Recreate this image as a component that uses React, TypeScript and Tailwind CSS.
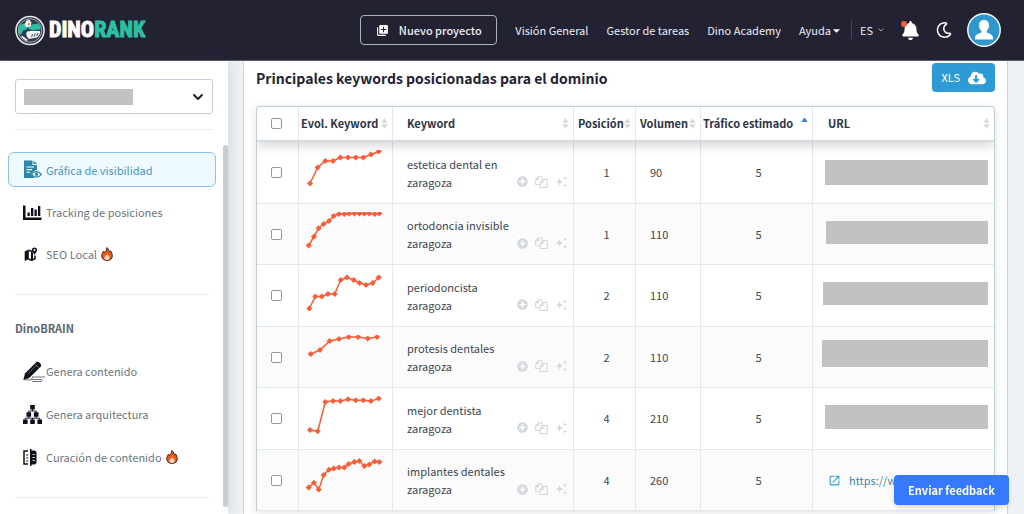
import React from 'react';
import { MdLibraryAdd, MdOpenInNew } from 'react-icons/md';
import { FaBell, FaRegMoon, FaCloudDownloadAlt, FaCaretDown, FaPlusCircle } from 'react-icons/fa';
import { ChevronDown } from 'lucide-react';

const keywords = [
    {
        text: "estetica dental en zaragoza", position: 1, volume: 90, traffic: 5,
        bar: "h-[25px] w-[163px]",
        points: [[11, 41.5], [18.7, 25.5], [26.3, 19], [34, 19], [41.3, 15.5], [49, 15.5], [56.7, 15.5], [64.3, 15.5], [72, 12.5], [79.7, 9.5]]
    },
    {
        text: "ortodoncia invisible zaragoza", position: 1, volume: 110, traffic: 5,
        bar: "mb-1 h-[23px] w-[162px]",
        points: [[9.7, 41.5], [15, 32.5], [19.7, 24.2], [24.7, 20], [30, 17], [34.7, 12], [40, 10], [45.3, 10], [50, 9.5], [55.3, 9.5], [60.3, 9.5], [65.3, 9.5], [70.3, 9.5], [75.7, 10], [80.3, 9.5]]
    },
    {
        text: "periodoncista zaragoza", position: 2, volume: 110, traffic: 5,
        bar: "mb-1 h-[23px] w-[165px]",
        points: [[10.3, 43.5], [16.3, 31.5], [22.7, 31.5], [29, 29], [35.7, 29], [41.7, 15], [48, 12.5], [54.7, 15], [60.7, 18], [67, 20], [73.7, 18], [79.7, 12.5]]
    },
    {
        text: "protesis dentales zaragoza", position: 2, volume: 110, traffic: 5,
        bar: "mb-2 h-[27px] w-[166px]",
        points: [[11.7, 27], [21, 23], [30.7, 14], [40, 12], [49.7, 10], [59, 10], [68.7, 11.5], [78, 10]]
    },
    {
        text: "mejor dentista zaragoza", position: 4, volume: 210, traffic: 5,
        bar: "mb-1 h-[24px] w-[163px]",
        points: [[11, 42], [18.7, 43.3], [26.3, 14], [34, 13], [41.3, 13], [49, 11.3], [56.7, 12.3], [64.3, 12.3], [72, 13], [79.7, 10.6]]
    },
    {
        text: "implantes dentales zaragoza", position: 4, volume: 260, traffic: 5,
        url: "https://w",
        points: [[9.7, 37.4], [15, 32.7], [19.7, 39.4], [24.7, 25], [30, 19.7], [34.7, 18.4], [40, 17.4], [45.3, 17.4], [49.7, 14], [55.3, 12], [60.3, 11], [65.3, 16], [70.3, 14.4], [75.7, 11.4], [80.3, 12]]
    }
];

function Logo() {
    return (
        <a href="#" className="flex items-center gap-1" aria-label="DinoRank">
            <svg width="30" height="31" viewBox="0 0 30 31" fill="none">
                <circle cx="15" cy="15.5" r="14" fill="#232233" stroke="#e8eaec" strokeWidth="1.6" />
                <circle cx="15" cy="15.5" r="11.8" fill="#2b3d50" stroke="#cfd6da" strokeWidth="0.8" />
                <path d="M3.5 13c1-3 3-4.500 6-4.500l3 2-1 4-3.500 1-2 4.500c-2-1.500-3-4-2.500-7z" fill="#2cc0a3" />
                <path d="M14 10l9-1.500c2 1.500 2.800 3.500 2.500 6l-8 .5-4-1z" fill="#2cc0a3" />
                <path d="M11 6l3-1.500 2.500 3-1 4-3.500 1-2.500-2.500z" fill="#f3efe6" />
                <path d="M13.500 7.500l1.500 1-.5 2-1.800-.6z" fill="#e2894a" />
                <path d="M12 16.500l5-.8 8 .3c.5 2.500-.8 5-3 6.500l-8 1.500c-2.500-2-3.500-5-2-7.500z" fill="#eef1f2" />
                <path d="M17.500 19l-.8 3M20 18.500l-.6 3M22.500 18l-.6 3" stroke="#2b3d50" strokeWidth=".9" />
                <path d="M7 20.500l6 4.500-2 1-5-4z" fill="#eef1f2" />
            </svg>
            <span className="font-['Liberation_Sans_Narrow','Roboto_Condensed','Liberation_Sans',sans-serif] text-[22px] leading-6 font-bold text-white [-webkit-text-stroke:1px_currentColor]">
                DINO<span className="text-[#2cc0a3]">RANK</span>
            </span>
        </a>
    )
}

function Flame() {
    return (
        <svg width="12" height="14" viewBox="0 0 12 14" fill="none">
            <path d="M5.800.6C8 2 7.800 3.800 8.600 5.200 9.200 4.800 9.300 4.200 9.300 3.800c1.200 1.400 2 3.200 2 5.100 0 2.800-2.200 4.500-5.200 4.500S.7 11.600.7 8.900c0-2.200 1.300-3.400 1.800-4.800.5.4.7.9.8 1.400C4.800 4.500 5.800 2.600 5.800.6z" fill="#f4580f" stroke="#3a2530" strokeWidth="1" />
            <path d="M6 7.200c1.200 1 2.600 2 2.600 3.600S7.500 13 6 13s-2.600-.8-2.600-2.200S5 8.600 6 7.200z" fill="#ffd9c2" />
        </svg>
    )
}

function ReportIcon() {
    return (
        <svg width="19" height="19" viewBox="0 0 19 19" fill="none">
            <path d="M1 .5h8.500v4.500H14v5.200c-2.500.2-4.400 1.600-5.800 3.800.8 1.400 1.700 2.400 2.900 3.200V18H1z" fill="#2b86a8" />
            <path d="M10.500.6L14 4.100h-3.500z" fill="#2b86a8" />
            <path d="M3.500 7h7.500M3.500 9.600h5.500M3.500 12.200H7" stroke="#fff" strokeWidth="1.100" />
            <path d="M8.600 14.300c2.300-3.700 7.200-3.700 9.700 0-2.500 3.700-7.400 3.700-9.700 0z" fill="#fff" stroke="#2b86a8" strokeWidth="1.200" />
            <circle cx="13.500" cy="14.300" r="1.700" fill="#2b86a8" />
        </svg>
    )
}

function TrackingIcon() {
    return (
        <svg width="19" height="15" viewBox="0 0 19 15" fill="#10101c">
            <path d="M0 .5h2.500v12H18.500V15H0z" />
            <path d="M4.500 7.500h2.300V11H4.500zM8 3h2.300v8H8zM11.500 4.500h2.300V11h-2.300zM15 1h2.300v10H15z" />
        </svg>
    )
}

function MapIcon() {
    return (
        <svg width="14" height="14" viewBox="0 0 14 14" fill="none" className="ml-px">
            <path d="M1 4.500L4.500 3v9L1 13.500z" fill="#10101c" stroke="#10101c" strokeWidth=".6" />
            <path d="M4.500 3.200l3.200 1v9L4.500 12M7.700 13.200l3.300-1.500V8.500" stroke="#10101c" strokeWidth="1.500" />
            <path d="M7.500 4.500v8.500l1.500-.7V6z" fill="#10101c" />
            <path d="M10.500.5a2.600 2.600 0 0 1 2.600 2.600c0 2-2.600 4.700-2.600 4.700S7.900 5.100 7.900 3.100A2.600 2.600 0 0 1 10.500.5z" fill="#10101c" />
            <circle cx="10.500" cy="3.100" r="1" fill="#fff" />
        </svg>
    )
}

function WriteIcon() {
    return (
        <svg width="22" height="21" viewBox="0 0 22 21" fill="none" className="shrink-0">
            <path d="M.3 19l1.700-6.500L13.200 1.200c2-1.600 6 2 4.600 4.300L6.200 17z" fill="#10101c" />
            <path d="M5 12.800L14 4M12 3.200l3.800 3.600" stroke="#8b8b95" strokeWidth=".7" />
            <path d="M1 18.800h8M9 16h13M10 16.200c-2 .8-1 2.300 0 2.300h8c1.500.2 1 2 0 2H9.500" stroke="#5b6170" strokeWidth=".9" />
        </svg>
    )
}

function TreeIcon() {
    return (
        <svg width="19" height="19" viewBox="0 0 19 19" fill="#10101c">
            <path d="M7.200 0h4.600v4.600H7.200zM3.500 7.200h4.600v4.600H3.500zM10.900 7.200h4.600v4.600h-4.600zM0 14.400h4.600V19H0zM7.200 14.400h4.600V19H7.200zM14.400 14.400H19V19h-4.600z" />
            <path d="M9.500 4v2.200M5.800 8V6h7.400v2M5.800 11v2.200M13.200 11v2.200M2.300 15v-1.800h14.400V15M9.500 13v2" fill="none" stroke="#10101c" strokeWidth=".9" />
        </svg>
    )
}

function CompareIcon() {
    return (
        <svg width="14" height="17" viewBox="0 0 14 17" fill="none">
            <path d="M5 2H1v13h4" stroke="#10101c" strokeWidth="1.500" />
            <path d="M3.200 6h2M3.200 9h2M3.200 12h2" stroke="#10101c" strokeWidth="1.200" />
            <path d="M7 0h1.500v1.500h3.500l1.500 1.500v11l-1.500 1.500H8.500V17H7z" fill="#10101c" />
            <path d="M9.500 5.500h2.300M9.500 8.500h2.300M9.500 11.500h2.300" stroke="#fff" strokeWidth=".8" />
        </svg>
    )
}

function SortArrows({ active = false }: { active?: boolean }) {
    return (
        <svg width="7" height="11" viewBox="0 0 7 11" className="shrink-0">
            <path d={active ? "M3.500-1L6.500 4H.5z" : "M3.500 0L6.500 4.700H.5z"} fill={active ? "#3d7bd9" : "#d3d8de"} />
            {!active && <path d="M3.500 11L6.500 6.300H.5z" fill="#d3d8de" />}
        </svg>
    )
}

function Sparkline({ points }: { points: number[][] }) {
    return (
        <svg viewBox="0 8 93 45" width="93" height="45" className="mt-2 block">
            <polyline points={points.map((p) => p.join(",")).join(" ")} fill="none" stroke="#fb5c36" strokeWidth="1.500" />
            {points.map(([x, y], index) => (
                <path key={index} d={`M${x - 3} ${y}L${x} ${y - 3}L${x + 3} ${y}L${x} ${y + 3}z`} fill="#fb5c36" />
            ))}
        </svg>
    )
}

function KeywordActions() {
    return (
        <div className="mb-[3px] flex items-center gap-[7px] text-[#d3d8de]">
            <button type="button" aria-label="Añadir"><FaPlusCircle size={11} /></button>
            <button type="button" aria-label="Copiar">
                <svg width="13" height="12" viewBox="0 0 13 12" fill="none" stroke="currentColor" strokeWidth="1.100">
                    <path d="M5 8.500H.7V3.700L3.500.8H7v3M3.600.8v3H.7M8 3.500h4.300v8H5.200V6.400zM8 3.500v3H5.200" />
                </svg>
            </button>
            <button type="button" aria-label="Generar">
                <svg width="12" height="12" viewBox="0 0 12 12" fill="currentColor">
                    <path d="M4.500 2L5.600 4.900 8.500 6 5.600 7.100 4.500 10 3.400 7.100.5 6 3.400 4.900zM10 .3l.6 1.500 1.400.6-1.400.6L10 4.500 9.400 3 8 2.400l1.400-.6zM10 7.500l.6 1.500 1.400.6-1.400.6-.6 1.500-.6-1.500L8 9.600 9.400 9z" />
                </svg>
            </button>
        </div>
    )
}

const checkbox = "block h-[11px] w-[11px] appearance-none rounded-[2px] border border-[#8f979f] bg-white checked:bg-[#2f9bd6]";
const menuItem = "flex h-[18px] items-center gap-1 text-[#6b7683]";
const menuIcon = "flex w-[19px] shrink-0 items-center";

function Header() {
    return (
        <header className="flex h-[61px] shrink-0 items-center justify-between border-b border-[#5d5a69] bg-[#232233] pr-[23px] pl-[15px] text-[11px] text-[#eceef1]">
            <Logo />
            <div className="flex items-center">
                <button type="button" className="flex h-[30px] w-[137px] items-center justify-center gap-[10px] rounded-[4px] border border-[#aab4bf] font-medium">
                    <MdLibraryAdd size={13} className="text-white" />
                    Nuevo proyecto
                </button>
                <nav className="ml-[18px] flex items-center gap-[18px]">
                    <a href="#">Visión General</a>
                    <a href="#">Gestor de tareas</a>
                    <a href="#">Dino Academy</a>
                    <a href="#" className="flex items-center">Ayuda <FaCaretDown size={11} className="text-white" /></a>
                </nav>
                <button type="button" className="ml-[9px] flex h-[18px] items-center gap-1 border-l border-[#3d4a5c] pl-2">
                    ES <ChevronDown size={8} />
                </button>
                <button type="button" aria-label="Notificaciones" className="relative ml-4 text-white">
                    <FaBell size={19} />
                    <span className="absolute top-0 left-0 h-[6px] w-[6px] rounded-full bg-[#fb5c36]" />
                </button>
                <button type="button" aria-label="Modo oscuro" className="ml-4 text-white"><FaRegMoon size={16} /></button>
                <button type="button" aria-label="Cuenta" className="ml-[15px]">
                    <svg width="34" height="34" viewBox="0 0 34 34" fill="none">
                        <circle cx="17" cy="17" r="16.200" fill="#2f97cc" stroke="#f1f4f6" strokeWidth="1.500" />
                        <path d="M17 7c3.300 0 5 2.300 5 5.400 0 2.300-1 4.300-2.400 5.400v1.800c2.800 1 6.400 2 6.400 5.400v1.500H8V25c0-3.400 3.600-4.400 6.400-5.400v-1.800C13 16.700 12 14.700 12 12.400 12 9.300 13.700 7 17 7z" fill="#fff" />
                    </svg>
                </button>
            </div>
        </header>
    )
}

function Sidebar() {
    return (
        <aside className="flex w-[228px] shrink-0 flex-col bg-white text-[11px] leading-[18px] shadow-[0_0_14px_rgba(40,60,80,0.18)]">
            <div className="px-[15px] pt-[18px]">
                <button type="button" aria-label="Dominio" className="flex h-[35px] w-full items-center justify-between rounded-[3px] border border-[#c3cfd8] pr-[6px] pl-2 text-[#232233]">
                    <span className="h-4 w-[109px] bg-[#c2c2c2]" />
                    <ChevronDown size={16} strokeWidth={3} />
                </button>
                <hr className="mt-[15px] border-[#eceff1]" />
            </div>
            <div className="mt-[15px] flex min-h-0 flex-1">
                <div className="min-w-0 flex-1 pl-2">
                    <a href="#" className="mt-[7px] flex h-[35px] items-center gap-1 rounded-[6px] border border-[#8fc0e6] bg-[#effaff] pl-[14px] text-[#4794cb]">
                        <span className={menuIcon}><ReportIcon /></span>
                        Gráfica de visibilidad
                    </a>
                    <ul className="mt-4 space-y-6 pl-[15px]">
                        <li><a href="#" className={menuItem}><span className={menuIcon}><TrackingIcon /></span>Tracking de posiciones</a></li>
                        <li><a href="#" className={menuItem}><span className={menuIcon}><MapIcon /></span>SEO Local <Flame /></a></li>
                    </ul>
                    <hr className="mt-[31px] mr-[7px] ml-[7px] border-[#e9ecee]" />
                    <h2 className="mt-6 pl-[7px] font-bold text-[#5b6574]">DinoBRAIN</h2>
                    <ul className="mt-[25px] space-y-[25px] pl-[15px]">
                        <li><a href="#" className={menuItem}><span className={menuIcon}><WriteIcon /></span>Genera contenido</a></li>
                        <li><a href="#" className={menuItem}><span className={menuIcon}><TreeIcon /></span>Genera arquitectura</a></li>
                        <li><a href="#" className={menuItem}><span className={menuIcon}><CompareIcon /></span>Curación de contenido <Flame /></a></li>
                    </ul>
                    <hr className="mt-[31px] mr-[7px] ml-[7px] border-[#e9ecee]" />
                </div>
                <div className="mb-[7px] ml-[7px] w-[5px] shrink-0 rounded-full bg-[#cbcbcb]" />
            </div>
        </aside>
    )
}

function KeywordTable() {
    const cell = "border-r border-b border-[#e3e8ec] last:border-r-0";
    const head = "border-r border-b-2 border-r-[#e3e8ec] border-b-[#d5dbe0] last:border-r-0";
    return (
        <div className="mt-[14px] overflow-hidden rounded-t-[4px] border border-b-0 border-[#bfcdd7] shadow-[0_2px_10px_rgba(40,60,80,0.15)]">
            <table className="w-full table-fixed border-separate border-spacing-0 text-[11px] text-[#3c4654]">
                <colgroup>
                    <col className="w-[42px]" />
                    <col className="w-[94px]" />
                    <col className="w-[181px]" />
                    <col className="w-[62px]" />
                    <col className="w-[65px]" />
                    <col className="w-[112px]" />
                    <col />
                </colgroup>
                <thead className="relative text-left text-[#2b3446] shadow-[0_4px_12px_rgba(0,0,0,0.16)]">
                    <tr className="h-[35px]">
                        <th className={head}><input type="checkbox" aria-label="Seleccionar todas" className={`${checkbox} ml-[14px]`} /></th>
                        <th className={head}><div className="flex items-center justify-between pr-1 pl-[2px] whitespace-nowrap">Evol. Keyword <SortArrows /></div></th>
                        <th className={head}><div className="flex items-center justify-between pr-1 pl-[14px]">Keyword <SortArrows /></div></th>
                        <th className={head}><div className="flex items-center justify-between pr-1 pl-1">Posición <SortArrows /></div></th>
                        <th className={head}><div className="flex items-center justify-between pr-1 pl-1">Volumen <SortArrows /></div></th>
                        <th className={head}><div className="flex items-center justify-between pr-1 pl-[2px] whitespace-nowrap">Tráfico estimado <SortArrows active /></div></th>
                        <th className={head}><div className="flex items-center justify-between pr-1 pl-[15px]">URL <SortArrows /></div></th>
                    </tr>
                </thead>
                <tbody>
                    {keywords.map((keyword) => (
                        <tr key={keyword.text} className="h-[61px] odd:h-[62px] even:bg-[#fbfbfb]">
                            <td className={cell}><input type="checkbox" aria-label={keyword.text} className={`${checkbox} ml-[14px]`} /></td>
                            <td className={`${cell} align-top`}><Sparkline points={keyword.points} /></td>
                            <td className={cell}>
                                <div className="flex items-end justify-between pr-[6px] pl-[14px]">
                                    <p className="w-[108px] leading-[18px]">{keyword.text}</p>
                                    <KeywordActions />
                                </div>
                            </td>
                            <td className={`${cell} pl-1 text-center`}>{keyword.position}</td>
                            <td className={`${cell} pl-[14px]`}>{keyword.volume}</td>
                            <td className={`${cell} pl-1 text-center`}>{keyword.traffic}</td>
                            <td className={cell}>
                                {keyword.url ? (
                                    <a href={keyword.url} className="flex items-center gap-2 pl-[15px] text-[#4086b4]">
                                        <MdOpenInNew size={13} className="shrink-0 text-[#2f9bd6]" />
                                        <span className="truncate">{keyword.url}</span>
                                    </a>
                                ) : (
                                    <div className={`${keyword.bar} ml-auto mr-[6px] bg-[#c2c2c2]`} />
                                )}
                            </td>
                        </tr>
                    ))}
                </tbody>
            </table>
        </div>
    )
}

function App() {
    return (
        <div className="flex h-screen flex-col overflow-hidden bg-[#eef2f5] font-['Noto_Sans_CJK_SC','Noto_Sans',sans-serif]">
            <Header />
            <div className="flex min-h-0 flex-1">
                <Sidebar />
                <main className="min-w-0 flex-1 overflow-hidden pr-4 pl-[15px]">
                    <section className="min-h-full border-x border-[#c9d3da] bg-white px-3 pt-[2px]">
                        <div className="flex items-center justify-between">
                            <h1 className="text-[14px] leading-5 font-bold text-[#232233]">Principales keywords posicionadas para el dominio</h1>
                            <button type="button" className="flex h-[29px] items-center gap-2 rounded-[4px] bg-[#2f9bd6] px-[9px] text-[11px] text-white">
                                XLS <FaCloudDownloadAlt size={18} />
                            </button>
                        </div>
                        <KeywordTable />
                    </section>
                </main>
            </div>
            <button type="button" className="fixed right-[15px] bottom-[9px] h-[30px] rounded-[4px] bg-[#3679ff] px-[14px] text-[11px] font-bold text-white shadow-md">
                Enviar feedback
            </button>
        </div>
    )
}

export default App;
